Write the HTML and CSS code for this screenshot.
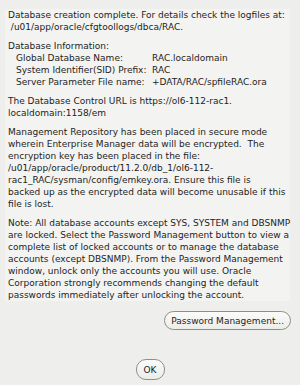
FILE: index.html
```html
<!DOCTYPE html>
<html lang="en">

<head>
    <meta charset="UTF-8">
    <title>Database Configuration Assistant</title>
    <link rel="stylesheet" href="styles.css">
</head>

<body>
    <div class="dialog">
        <div class="message">
            <p>Database creation complete. For details check the logfiles at:<br>&nbsp;/u01/app/oracle/cfgtoollogs/dbca/RAC.</p>

            <div class="info">
                <div class="info-title">Database Information:</div>
                <div class="info-grid">
                    <span>Global Database Name:</span><span>RAC.localdomain</span>
                    <span>System Identifier(SID) Prefix:</span><span>RAC</span>
                    <span>Server Parameter File name:</span><span>+DATA/RAC/spfileRAC.ora</span>
                </div>
            </div>

            <p>The Database Control URL is https://ol6-112-rac1.<br>localdomain:1158/em</p>

            <p>Management Repository has been placed in secure mode<br>wherein Enterprise Manager data will be encrypted.&nbsp; The<br>encryption key has been placed in the file:<br>/u01/app/oracle/product/11.2.0/db_1/ol6-112-<br>rac1_RAC/sysman/config/emkey.ora. Ensure this file is<br>backed up as the encrypted data will become unusable if this<br>file is lost.</p>

            <p>Note: All database accounts except SYS, SYSTEM and DBSNMP<br>are locked. Select the Password Management button to view a<br>complete list of locked accounts or to manage the database<br>accounts (except DBSNMP). From the Password Management<br>window, unlock only the accounts you will use. Oracle<br>Corporation strongly recommends changing the default<br>passwords immediately after unlocking the account.</p>
        </div>

        <div class="actions">
            <button class="btn">Password Management...</button>
        </div>

        <div class="footer">
            <button class="btn btn-ok">OK</button>
        </div>
    </div>
</body>

</html>
```

FILE: styles.css
```css
/* Общие стили */
body {
    margin: 0;
    padding: 0;
    background-color: #eeeeec;
    font-family: 'DejaVu Sans', sans-serif;
    font-size: 9px;
    color: #1e1e1e;
}

.dialog {
    width: 300px;
    height: 385px;
    display: flex;
    flex-direction: column;
}

/* Текст сообщения */
.message {
    margin: 9px 10px 0 5px;
    padding: 0 0 0 3px;
    background-color: #f3f3f1;
    line-height: 12px;
}

.message p {
    margin: 0 0 7px 0;
    white-space: nowrap;
}

.message p:last-child {
    margin-bottom: 0;
}

.info {
    margin-bottom: 7px;
}

.info-grid {
    display: grid;
    grid-template-columns: 136px auto;
    padding-left: 8px;
}

/* Кнопки */
.actions {
    display: flex;
    justify-content: flex-end;
    padding: 10px 9px 0 0;
}

.footer {
    display: flex;
    justify-content: center;
    padding-top: 29px;
}

.btn {
    font-family: 'DejaVu Sans', sans-serif;
    font-size: 9px;
    color: #1e1e1e;
    background: linear-gradient(#fbfbfa, #ecece9);
    border: 1px solid #8e8e8a;
    border-radius: 10px;
    height: 19px;
    padding: 0 6px;
    cursor: pointer;
}

.btn-ok {
    width: 29px;
    height: 21px;
    padding: 0;
}
```
